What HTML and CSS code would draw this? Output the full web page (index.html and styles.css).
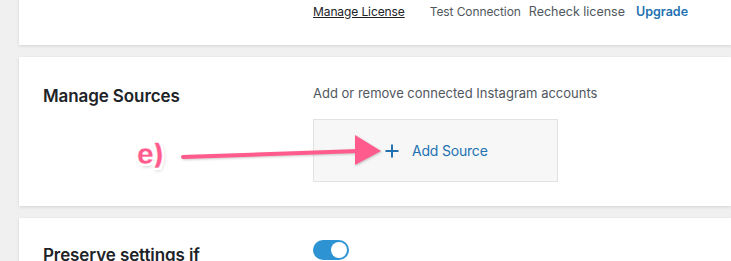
FILE: index.html
```html
<!doctype html>
<html>
  <head>
    <title>Settings</title>
    <meta charset='utf-8'>
    <link rel="stylesheet" href="styles.css">
  </head>
  <body>
    <div class='st-page'>
      <section class='st-card st-license'>
        <div class='st-actions'>
          <a class='st-link st-underline' href='#'>Manage License</a>
          <span class='st-link st-test'>Test Connection</span>
          <span class='st-link st-recheck'>Recheck license</span>
          <a class='st-link st-upgrade' href='#'>Upgrade</a>
        </div>
      </section>
      <section class='st-card st-sources'>
        <h2 class='st-label'>Manage Sources</h2>
        <div class='st-field'>
          <p class='st-desc'>Add or remove connected Instagram accounts</p>
          <div class='st-addbox'>
            <svg class='st-plus' width='14' height='14' viewBox='0 0 14 14'>
              <path d='M7 0.5V13.5M0.5 7H13.5' stroke='#2271b1' stroke-width='2' fill='none'/>
            </svg>
            <span class='st-addtext'>Add Source</span>
          </div>
        </div>
        <span class='an-label'>e)</span>
        <svg class='an-arrow' width='210' height='40' viewBox='0 0 210 40'>
          <line x1='2' y1='24' x2='178' y2='18' stroke='#ff5b8d' stroke-width='4' stroke-linecap='round'/>
          <polygon points='174,2 200,18 174,32' fill='#ff5b8d'/>
        </svg>
      </section>
      <section class='st-card st-preserve'>
        <h2 class='st-label'>Preserve settings if</h2>
        <div class='st-field'>
          <span class='st-toggle'><span class='st-knob'></span></span>
        </div>
      </section>
    </div>
  </body>
</html>
```
FILE: styles.css
```css
body {
  margin: 0;
  background-color: #f0f0f1;
  font-family: Inter, 'Noto Sans', sans-serif;
  color: #50575e;
  overflow: hidden;
}
.st-page {
  padding-left: 19px;
  margin-top: -20px;
}
.st-card {
  position: relative;
  background-color: #fff;
  box-shadow: 0 1px 3px rgba(0, 0, 0, 0.12);
  margin-bottom: 12px;
  display: flex;
  padding-left: 24px;
}
.st-license {
  height: 65px;
  padding-left: 294px;
}
.st-actions {
  display: flex;
  align-items: center;
  height: 22px;
  margin-top: 20px;
  font-size: 12px;
  letter-spacing: -0.1px;
}
.st-link {
  color: #50575e;
  margin-right: 8px;
  text-decoration: none;
}
.st-underline {
  color: #1d2327;
  text-decoration: underline;
  margin-right: 25px;
}
.st-recheck {
  font-size: 12.5px;
  letter-spacing: 0;
}
.st-upgrade {
  color: #2271b1;
  font-weight: 600;
  font-size: 12.5px;
  letter-spacing: 0;
  margin-left: 3px;
}
.st-sources {
  height: 149px;
}
.st-label {
  width: 270px;
  margin: 0;
  font-size: 17px;
  font-weight: 600;
  color: #1d2327;
  letter-spacing: -0.1px;
}
.st-sources .st-label {
  padding-top: 29px;
}
.st-desc {
  margin: 27px 0 17px;
  font-size: 13px;
  line-height: 18px;
}
.st-addbox {
  width: 245px;
  height: 63px;
  background-color: #f7f7f7;
  border: 1px solid #e2e2e4;
  display: flex;
  align-items: center;
  padding-left: 71px;
  box-sizing: border-box;
  color: #2271b1;
}
.st-plus {
  margin-right: 13px;
}
.st-addtext {
  font-size: 14px;
  letter-spacing: -0.2px;
}
.an-label {
  position: absolute;
  left: 118px;
  top: 80px;
  font-size: 28px;
  font-weight: 800;
  color: #ff5b8d;
  -webkit-text-stroke: 0.5px #fff;
  text-shadow: 0 0 2px #fff, 2px 2px 0 #fff, -2px -2px 0 #fff, 2px -2px 0 #fff, -2px 2px 0 #fff, 1px 2px 4px rgba(0, 0, 0, 0.3);
}
.an-arrow {
  position: absolute;
  left: 162px;
  top: 76px;
  filter: drop-shadow(1px 1px 1px rgba(0, 0, 0, 0.2));
}
.st-preserve {
  height: 60px;
}
.st-preserve .st-label {
  padding-top: 27px;
}
.st-toggle {
  display: block;
  margin-top: 22px;
  width: 36px;
  height: 20px;
  border-radius: 10px;
  background-color: #2e93d2;
  position: relative;
}
.st-knob {
  position: absolute;
  right: 2px;
  top: 2px;
  width: 16px;
  height: 16px;
  border-radius: 50%;
  background-color: #fff;
}
```
